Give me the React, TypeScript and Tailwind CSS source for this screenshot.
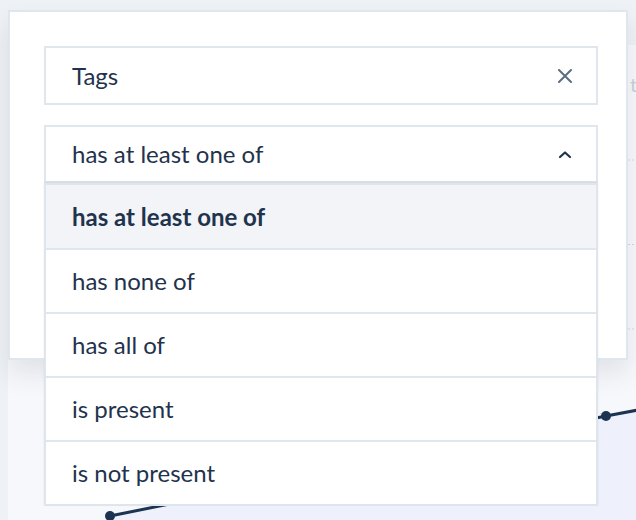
import React from "react";

const options = ["has at least one of", "has none of", "has all of", "is present", "is not present"];

export default function App() {
  const selected = options[0];

  return (
    <div
      className="relative h-[520px] w-[636px] overflow-hidden bg-[#eef1f5]"
      style={{ fontFamily: "Lato, 'Noto Sans', sans-serif" }}
    >
      {/* card behind the popup, with its chart */}
      <div className="relative ml-2 mt-[45px] h-[475px] bg-[#f7f8fb]">
        <span className="absolute left-[622px] top-[24px] text-[20px] text-[#c9d0d8]">t</span>
        <svg className="block" width="628" height="475" viewBox="0 0 628 475">
          {[115, 199.5, 284, 368.5, 453].map((y) => (
            <line key={y} x1="80" x2="628" y1={y} y2={y} stroke="#d3d8df" strokeWidth="1" strokeDasharray="2 2" />
          ))}
          <path d="M102 471 L598 371 L630 365 L630 475 L102 475 Z" fill="#eef0fb" />
          <path d="M102 471 L598 371 L630 365" fill="none" stroke="#1c3352" strokeWidth="3" />
          <circle cx="102" cy="471" r="5" fill="#1c3352" />
          <circle cx="598" cy="371" r="5" fill="#1c3352" />
        </svg>
      </div>

      {/* filter popup */}
      <div className="absolute left-2 top-[10px] flex h-[350px] w-[620px] flex-col gap-[20px] border-2 border-[#e0e6ed] bg-white pl-[34px] pr-[28px] pt-[34px] shadow-[0_14px_24px_rgba(30,45,70,0.10)]">
        <div className="flex h-[59px] items-center justify-between border-2 border-[#e0e6ed] pl-[26px] pr-[24px] text-[24px] text-[#1f334d]">
          <span>Tags</span>
          <svg width="14" height="14" viewBox="0 0 14 14">
            <path d="M1 1 L13 13 M13 1 L1 13" stroke="#5b6f82" strokeWidth="2" strokeLinecap="round" />
          </svg>
        </div>

        <div className="relative">
          <div className="flex h-[58px] items-center justify-between border-2 border-[#e0e6ed] pl-[26px] pr-[24px] text-[24px] text-[#1f334d]">
            <span>{selected}</span>
            <svg width="14" height="9" viewBox="0 0 14 9">
              <path d="M2 7 L7 2.5 L12 7" fill="none" stroke="#1f334d" strokeWidth="2.2" strokeLinecap="round" strokeLinejoin="round" />
            </svg>
          </div>

          <ul className="absolute left-0 right-0 top-[58px] z-10 border-2 border-[#dfe5ec] bg-white shadow-[0_-1px_2px_rgba(30,45,70,0.08)]">
            {options.map((o, i) => (
              <li
                key={o}
                className={
                  i === 0
                    ? "flex h-[63px] items-center bg-[#f2f4f7] pl-[26px] text-[24px] font-bold text-[#1f334d]"
                    : "flex h-[64px] items-center border-t-2 border-[#e0e6ed] pl-[26px] text-[24px] text-[#1f334d]"
                }
              >
                {o}
              </li>
            ))}
          </ul>
        </div>
      </div>
    </div>
  );
}
